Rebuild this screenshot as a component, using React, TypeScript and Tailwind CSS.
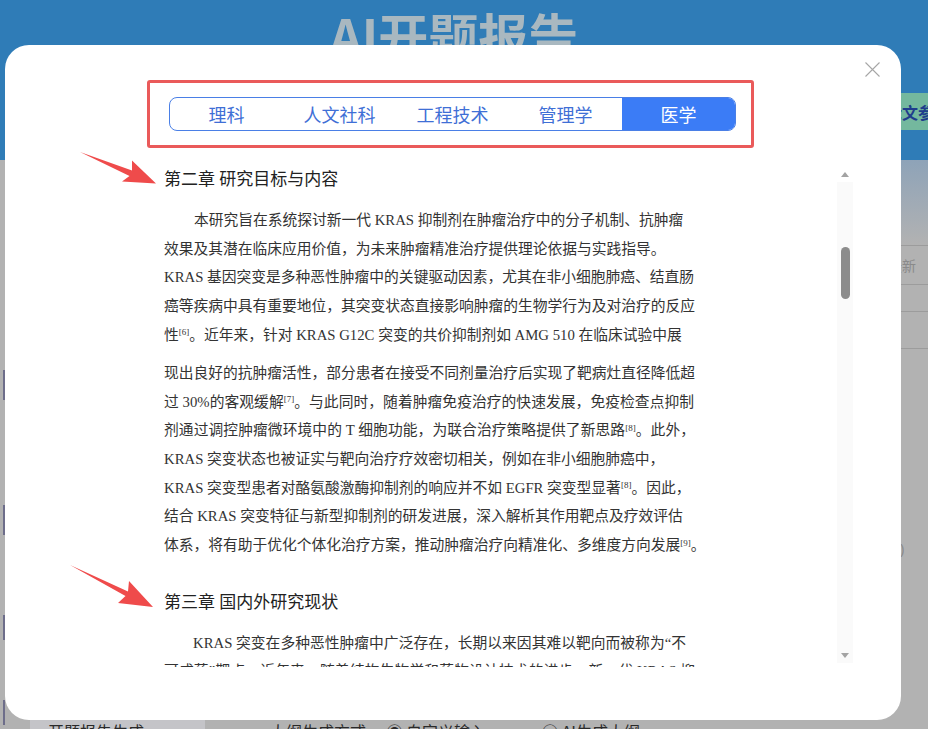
import React from 'react';

const tabs = ['理科', '人文社科', '工程技术', '管理学', '医学'];
const docFont = "font-['Liberation_Serif','Noto_Sans_CJK_SC',serif]";

function Sup({ n }: { n: number }) {
  return <sup className="text-[9px]">[{n}]</sup>;
}

function Line({ className = '', children }: { className?: string; children: React.ReactNode }) {
  return <div className={`h-[28.7px] leading-[28.7px] whitespace-nowrap ${className}`}>{children}</div>;
}

const J = 'text-justify [text-align-last:justify]';

function Arrows() {
  return (
    <svg className="absolute inset-0 pointer-events-none" width="928" height="729" viewBox="0 0 928 729">
      <polygon points="80,152 132,170.5 132,160.5 156,183.5 122,181.5 129.5,176" fill="#ef4b4b" />
      <polygon points="70,565 128,591.5 129,581 153,607 118,603 125.5,596" fill="#ef4b4b" />
    </svg>
  );
}

function ScrollBar() {
  return (
    <div className="w-[16px] flex flex-col pb-[4px]">
      <div className="h-[16px] flex items-center justify-center">
        <div className="w-0 h-0 border-x-[4px] border-x-transparent border-b-[5px] border-b-[#a3a3a3]" />
      </div>
      <div className="flex-1 bg-[#fafafa] flex flex-col items-center">
        <div className="mt-[65px] w-[9px] h-[52px] rounded-full bg-[#8c8c8c]" />
      </div>
      <div className="h-[16px] flex items-center justify-center bg-[#fafafa]">
        <div className="w-0 h-0 border-x-[4px] border-x-transparent border-t-[5px] border-t-[#a3a3a3]" />
      </div>
    </div>
  );
}

function Background() {
  return (
    <div className="w-[928px] h-[729px] flex flex-col bg-[#b2b2b2] overflow-hidden">
      {/* header band */}
      <div className="shrink-0 h-[160px] bg-[#2f7cb7] flex flex-col">
        <div className="pt-[4px] pr-[20px] text-center text-[50px] leading-[60px] font-bold text-[#a9b8c0] font-['Noto_Sans_CJK_SC',sans-serif]">
          AI开题报告
        </div>
        <div className="mt-[29px] pl-[876px] flex">
          <div className="shrink-0 h-[37px] pl-[10px] bg-[#74b89e] flex items-center whitespace-nowrap text-[16px] font-bold text-[#1f3d8c] font-['Noto_Sans_CJK_SC',sans-serif]">
            论文参考文献
          </div>
        </div>
      </div>
      {/* page body */}
      <div className="flex-1 min-h-0 flex">
        <div className="w-[5px] flex flex-col items-end">
          <div className="mt-[210px] w-[2px] h-[30px] bg-[#6d6d8a]" />
          <div className="mt-[105px] w-[2px] h-[30px] bg-[#6d6d8a]" />
          <div className="mt-[80px] w-[2px] h-[25px] bg-[#6d6d8a]" />
          <div className="mt-[60px] w-[2px] h-[25px] bg-[#6d6d8a]" />
        </div>
        <div className="flex-1 flex flex-col">
          <div className="shrink-0 h-[85px] bg-gradient-to-b from-[#8ea3b8] to-[#b2b2b2]" />
          <div className="shrink-0 ml-[895px] border-t border-[#9c9c9c] h-[39px] flex items-center">
            <span className="-ml-[12px] text-[14px] text-[#8a8a8a] font-['Noto_Sans_CJK_SC',sans-serif] whitespace-nowrap">
              最新
            </span>
          </div>
          <div className="shrink-0 ml-[895px] border-t border-[#9c9c9c] h-[27px]" />
          <div className="shrink-0 ml-[895px] border-t border-[#9c9c9c] h-[37px]" />
          <div className="shrink-0 ml-[895px] border-t border-[#9c9c9c] h-[190px]" />
          <div className="shrink-0 ml-[895px] text-[14px] text-[#8a8a8a] h-[20px]">)</div>
          <div className="shrink-0 mt-[157px] flex items-start text-[16px] text-[#2a2a2a] font-['Noto_Sans_CJK_SC',sans-serif] whitespace-nowrap">
            <div className="ml-[25px] w-[175px] h-[30px] bg-[#c4c4c8] pl-[18px] pt-[4px]">开题报告生成</div>
            <div className="ml-[65px] pt-[4px]">大纲生成方式:</div>
            <div className="ml-[16px] pt-[4px]">◉ 自定义输入</div>
            <div className="ml-[56px] pt-[4px]">○ AI生成大纲</div>
          </div>
        </div>
      </div>
    </div>
  );
}

export default function App() {
  return (
    <div className="relative w-[928px] h-[729px] overflow-hidden">
      <Background />

      {/* Modal overlay */}
      <div className="absolute inset-0 pl-[5px] pt-[45px]">
        <div className="relative w-[896px] h-[675px] bg-white rounded-[24px] flex flex-col">
          {/* close */}
          <button className="absolute top-[17px] right-[21px] w-[15px] h-[15px]" aria-label="close">
            <svg width="15" height="15" viewBox="0 0 15 15">
              <path d="M0.5 0.5 L14.5 14.5 M14.5 0.5 L0.5 14.5" stroke="#a6a6a6" strokeWidth="1.1" fill="none" />
            </svg>
          </button>

          {/* tabs with annotation frame */}
          <div className="mt-[35px] ml-[142px] w-[607px] h-[68px] border-[3px] border-[#ea5a5a] rounded-[3px] px-[19px] pt-[14px]">
            <div className="flex w-[567px] h-[34px] border border-[#4a7fe6] rounded-[8px] overflow-hidden font-['Noto_Sans_CJK_SC',sans-serif]">
              {tabs.map((t) => (
                <div
                  key={t}
                  className={`flex-1 flex items-center justify-center text-[18px] ${
                    t === '医学' ? 'bg-[#3b7cf6] text-white' : 'text-[#3f6fd6]'
                  }`}
                >
                  {t}
                </div>
              ))}
            </div>
          </div>

          {/* document */}
          <div className="mt-[18px] h-[501px] flex">
            <div className={`ml-[159px] flex-1 overflow-hidden text-[14.75px] text-[#333] ${docFont}`}>
              <div className="h-[28px] leading-[28px] text-[17px] text-[#222]">第二章 研究目标与内容</div>
              <div className="mt-[12px]">
                <Line className="pl-[30px]">本研究旨在系统探讨新一代 KRAS 抑制剂在肿瘤治疗中的分子机制、抗肿瘤</Line>
                <Line>效果及其潜在临床应用价值，为未来肿瘤精准治疗提供理论依据与实践指导。</Line>
                <Line className={`w-[530px] ${J}`}>KRAS 基因突变是多种恶性肿瘤中的关键驱动因素，尤其在非小细胞肺癌、结直肠</Line>
                <Line>癌等疾病中具有重要地位，其突变状态直接影响肿瘤的生物学行为及对治疗的反应</Line>
                <Line className={`w-[516px] ${J}`}>
                  性<Sup n={6} />。近年来，针对 KRAS G12C 突变的共价抑制剂如 AMG 510 在临床试验中展
                </Line>
              </div>
              <div className="mt-[9.5px]">
                <Line>现出良好的抗肿瘤活性，部分患者在接受不同剂量治疗后实现了靶病灶直径降低超</Line>
                <Line className={`w-[530px] ${J}`}>
                  过 30%的客观缓解<Sup n={7} />。与此同时，随着肿瘤免疫治疗的快速发展，免疫检查点抑制
                </Line>
                <Line className={`w-[531px] ${J}`}>
                  剂通过调控肿瘤微环境中的 T 细胞功能，为联合治疗策略提供了新思路<Sup n={8} />。此外，
                </Line>
                <Line className={`w-[500px] ${J}`}>KRAS 突变状态也被证实与靶向治疗疗效密切相关，例如在非小细胞肺癌中，</Line>
                <Line className={`w-[518px] ${J}`}>
                  KRAS 突变型患者对酪氨酸激酶抑制剂的响应并不如 EGFR 突变型显著<Sup n={8} />。因此，
                </Line>
                <Line className={`w-[518px] ${J}`}>结合 KRAS 突变特征与新型抑制剂的研发进展，深入解析其作用靶点及疗效评估</Line>
                <Line className={`w-[534px] ${J}`}>
                  体系，将有助于优化个体化治疗方案，推动肿瘤治疗向精准化、多维度方向发展<Sup n={9} />。
                </Line>
              </div>
              <div className="mt-[29.5px] h-[28px] leading-[28px] text-[17px] text-[#222]">第三章 国内外研究现状</div>
              <div className="mt-[11.5px]">
                <Line className={`w-[522px] pl-[29px] ${J}`}>KRAS 突变在多种恶性肿瘤中广泛存在，长期以来因其难以靶向而被称为“不</Line>
                <Line className={`w-[531px] ${J}`}>可成药”靶点。近年来，随着结构生物学和药物设计技术的进步，新一代 KRAS 抑</Line>
              </div>
            </div>
            <ScrollBar />
            <div className="w-[48px]" />
          </div>
        </div>
      </div>

      <Arrows />
    </div>
  );
}
